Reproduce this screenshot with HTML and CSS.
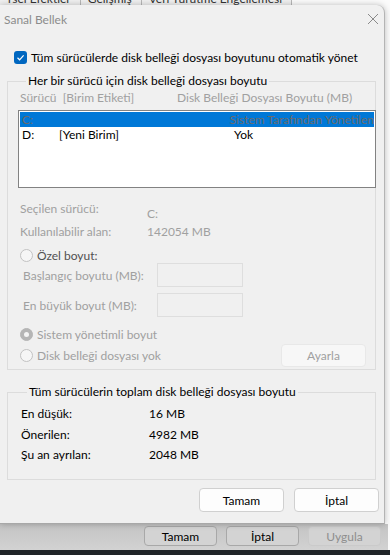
FILE: index.html
```html
<!DOCTYPE html>
<html lang="tr">
<head>
    <meta charset="UTF-8">
    <meta name="viewport" content="width=device-width, initial-scale=1.0">
    <title>Sanal Bellek</title>
    <link rel="stylesheet" href="styles.css">
</head>
<body>
    <div class="screen">
        <!-- Arkadaki pencerenin sekmeleri -->
        <div class="tabs">
            <span class="tab tab-first">rsel Efektler</span>
            <span class="tab">Gelişmiş</span>
            <span class="tab">Veri Yürütme Engellemesi</span>
        </div>

        <div class="dialog">
            <div class="titlebar">
                <span class="title">Sanal Bellek</span>
                <svg class="close" width="12" height="12" viewBox="0 0 12 12">
                    <path d="M1 1 L11 11 M11 1 L1 11" stroke="#8a8a8a" stroke-width="1" fill="none"/>
                </svg>
            </div>

            <div class="content">
                <div class="check-row">
                    <span class="checkbox">
                        <svg width="13" height="13" viewBox="0 0 13 13">
                            <path d="M3.5 6.8 L5.6 8.8 L9.6 4.4" stroke="#fff" stroke-width="1.2" fill="none"/>
                        </svg>
                    </span>
                    <span>Tüm sürücülerde disk belleği dosyası boyutunu otomatik yönet</span>
                </div>

                <!-- Sürücü başına ayarlar -->
                <fieldset class="group group-drives">
                    <legend>Her bir sürücü için disk belleği dosyası boyutu</legend>

                    <div class="list-head">
                        <span class="col-drive">Sürücü&nbsp;&nbsp;[Birim Etiketi]</span>
                        <span>Disk Belleği Dosyası Boyutu (MB)</span>
                    </div>
                    <div class="listbox">
                        <div class="list-row selected">
                            <span class="c-drive">C:</span>
                            <span class="c-label"></span>
                            <span class="c-size">Sistem Tarafından Yönetilen</span>
                        </div>
                        <div class="list-row">
                            <span class="c-drive">D:</span>
                            <span class="c-label">[Yeni Birim]</span>
                            <span class="c-size">Yok</span>
                        </div>
                    </div>

                    <div class="info">
                        <span>Seçilen sürücü:</span>
                        <span class="info-drive">C:</span>
                        <span>Kullanılabilir alan:</span>
                        <span>142054 MB</span>
                    </div>

                    <div class="radio-row radio-custom">
                        <span class="radio"></span>
                        <span>Özel boyut:</span>
                    </div>
                    <div class="size-row size-first">
                        <span>Başlangıç boyutu (MB):</span>
                        <span class="input"></span>
                    </div>
                    <div class="size-row">
                        <span>En büyük boyut (MB):</span>
                        <span class="input"></span>
                    </div>

                    <div class="radio-row radio-system">
                        <span class="radio checked"></span>
                        <span>Sistem yönetimli boyut</span>
                    </div>
                    <div class="radio-row radio-none">
                        <span class="radio"></span>
                        <span class="radio-text">Disk belleği dosyası yok</span>
                        <button class="btn btn-disabled">Ayarla</button>
                    </div>
                </fieldset>

                <!-- Toplam -->
                <fieldset class="group group-total">
                    <legend>Tüm sürücülerin toplam disk belleği dosyası boyutu</legend>
                    <div class="totals">
                        <span>En düşük:</span><span>16 MB</span>
                        <span>Önerilen:</span><span>4982 MB</span>
                        <span>Şu an ayrılan:</span><span>2048 MB</span>
                    </div>
                </fieldset>

                <div class="actions">
                    <button class="btn">Tamam</button>
                    <button class="btn">İptal</button>
                </div>
            </div>
        </div>

        <!-- Arkadaki pencerenin alt düğmeleri -->
        <div class="parent-footer">
            <button class="pbtn">Tamam</button>
            <button class="pbtn">İptal</button>
            <button class="pbtn pbtn-disabled">Uygula</button>
        </div>
        <div class="desktop"></div>
    </div>
</body>
</html>
```

FILE: styles.css
```css
/* Genel */
body {
    margin: 0;
    font-family: Lato, "Noto Sans", sans-serif;
    font-size: 12px;
    color: #000;
    background: #202428;
}

.screen {
    width: 390px;
    height: 555px;
    overflow: hidden;
    background: #fbfbfb;
    display: flex;
    flex-direction: column;
}

/* Sekmeler (kesik) */
.tabs {
    height: 5px;
    overflow: hidden;
    display: flex;
}

.tab {
    line-height: 5px;
    margin-top: -4px;
    padding: 0 9px 0 7px;
    color: #333;
    border-right: 1px solid #b8b8b8;
    background: #f0f0f0;
    height: 9px;
}

.tab-first {
    padding-left: 10px;
    margin-left: -2px;
}

/* Diyalog */
.dialog {
    width: 385px;
    height: 519px;
    background: #f0f0f0;
    border-right: 1px solid #b4b4b4;
    border-bottom: 1px solid #a8a8a8;
    border-top-right-radius: 8px;
    box-shadow: 0 0 6px rgba(0, 0, 0, 0.25);
    position: relative;
    z-index: 1;
    box-sizing: border-box;
    display: flex;
    flex-direction: column;
}

.titlebar {
    height: 30px;
    display: flex;
    align-items: center;
    justify-content: space-between;
    padding: 0 5px 0 4px;
    margin-top: -1px;
}

.title {
    color: #8c8c8c;
}

.content {
    padding: 0 8px 0 7px;
    display: flex;
    flex-direction: column;
}

.check-row {
    display: flex;
    align-items: center;
    gap: 4px;
    margin: 16px 0 0 7px;
    height: 14px;
}

.checkbox {
    width: 13px;
    height: 13px;
    border-radius: 3px;
    background: #0067c0;
    display: flex;
}

/* Grup kutuları */
.group {
    margin: 0;
    border: 1px solid #dcdcdc;
    padding: 0;
    min-width: 0;
}

.group legend {
    padding: 0 2px;
    margin-left: 6px;
    line-height: 14px;
}

.group-drives {
    margin-top: 10px;
    height: 296px;
    box-sizing: border-box;
    padding: 4px 0 0 12px;
    color: #a0a0a0;
}

.group-drives legend {
    color: #000;
}

.list-head {
    display: flex;
    height: 14px;
    line-height: 14px;
    margin-top: -1px;
}

.col-drive {
    width: 157px;
}

.listbox {
    margin: 5px -1px 0 -2px;
    height: 78px;
    box-sizing: border-box;
    border: 1px solid #828282;
    background: #fff;
    padding: 1px 1px;
    overflow: hidden;
    color: #000;
}

.list-row {
    display: flex;
    height: 15px;
    line-height: 15px;
    white-space: nowrap;
    padding-left: 2px;
}

.list-row.selected {
    background: #0078d7;
    color: #6b6b6b;
}

.c-drive {
    width: 37px;
}

.c-label {
    flex: 0 0 175px;
}

.info {
    display: grid;
    grid-template-columns: 127px auto;
    row-gap: 9px;
    margin-top: 14px;
    line-height: 14px;
}

.info-drive {
    position: relative;
    top: 5px;
}

.radio-row {
    display: flex;
    align-items: center;
    gap: 4px;
    height: 14px;
}

.radio {
    width: 11px;
    height: 11px;
    border-radius: 50%;
    border: 1px solid #c2c2c2;
    background: #f6f6f6;
    box-sizing: content-box;
    display: flex;
    align-items: center;
    justify-content: center;
}

.radio.checked {
    background: #b5b5b5;
    border-color: #b5b5b5;
}

.radio.checked::after {
    content: "";
    width: 5px;
    height: 5px;
    border-radius: 50%;
    background: #f4f4f4;
}

.radio-custom {
    margin-top: 9px;
    color: #505050;
}

.size-row {
    display: flex;
    align-items: center;
    height: 24px;
    margin-top: 6px;
    padding-left: 3px;
}

.size-row span:first-child {
    width: 134px;
}

.size-row.size-first {
    margin-top: 1px;
}

.input {
    width: 84px;
    height: 22px;
    border: 1px solid #dedede;
}

.radio-system {
    margin-top: 10px;
}

.radio-none {
    margin-top: 7px;
}

.radio-text {
    flex: 1;
}

/* Düğmeler */
.btn {
    font-family: inherit;
    font-size: 12px;
    width: 85px;
    height: 24px;
    border: 1px solid #d0d0d0;
    border-radius: 4px;
    background: #fdfdfd;
    color: #000;
    padding: 0;
}

.btn-disabled {
    width: 85px;
    height: 23px;
    margin-right: 9px;
    background: #f7f7f7;
    border-color: #e8e8e8;
    color: #a0a0a0;
}

.group-total {
    margin-top: 15px;
    height: 95px;
    box-sizing: border-box;
    padding: 4px 0 0 13px;
}

.totals {
    display: grid;
    grid-template-columns: 128px auto;
    row-gap: 6px;
    line-height: 14.5px;
    margin-top: 4px;
}

.actions {
    display: flex;
    justify-content: flex-end;
    gap: 10px;
    margin: 8px -3px 0 0;
}

/* Arkadaki pencere */
.parent-footer {
    height: 26px;
    background: linear-gradient(#c4c4c4, #d2d2d2);
    display: flex;
    justify-content: flex-end;
    align-items: flex-start;
    gap: 9px;
    padding: 2px 7px 0 0;
    box-sizing: border-box;
    width: 388px;
}

.pbtn {
    font-family: inherit;
    font-size: 12px;
    width: 73px;
    height: 20px;
    padding: 0;
    border: 1px solid #a8a8a8;
    border-radius: 4px;
    background: #d3d3d3;
    color: #000;
}

.pbtn-disabled {
    border-color: #cacaca;
    color: #8e8e8e;
}

.desktop {
    flex: 1;
    background: #202428;
}
```
